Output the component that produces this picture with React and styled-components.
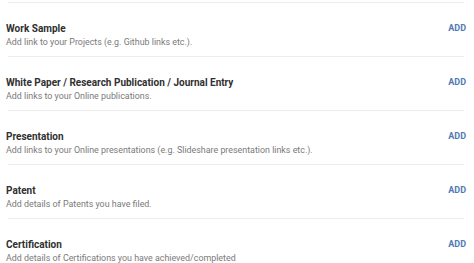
import React from "react";
import styled, { createGlobalStyle } from "styled-components";

const Global = createGlobalStyle`
  html, body { margin: 0; padding: 0; background: #fff; }
  body { font-family: Roboto, "Noto Sans", Arial, sans-serif; }
`;

const List = styled.div`
  padding-top: 2px;
  display: flex;
  flex-direction: column;
`;

const Divider = styled.div`
  height: 1px;
  background: #ececec;
  margin: 0 10px 0 8px;
`;

const Row = styled.div`
  height: 53px;
  display: flex;
  align-items: flex-start;
  justify-content: space-between;
  padding: 20px 8px 0 6px;
  box-sizing: border-box;
`;

const Texts = styled.div`
  display: flex;
  flex-direction: column;
`;

const Title = styled.div`
  font-size: 10px;
  font-weight: 700;
  color: #303030;
  line-height: 12px;
`;

const Sub = styled.div`
  margin-top: 2px;
  font-size: 8.9px;
  color: #7a7a7a;
  line-height: 11px;
`;

const Add = styled.button`
  border: 0;
  background: none;
  padding: 0;
  font-family: inherit;
  font-size: 9px;
  line-height: 11px;
  font-weight: 700;
  color: #5079b5;
`;

const items = [
  ["Work Sample", "Add link to your Projects (e.g. Github links etc.)."],
  ["White Paper / Research Publication / Journal Entry", "Add links to your Online publications."],
  ["Presentation", "Add links to your Online presentations (e.g. Slideshare presentation links etc.)."],
  ["Patent", "Add details of Patents you have filed."],
  ["Certification", "Add details of Certifications you have achieved/completed"],
];

export default function App() {
  return (
    <>
      <Global />
      <List>
        {items.map(([t, s]) => (
          <React.Fragment key={t}>
            <Divider />
            <Row>
              <Texts>
                <Title>{t}</Title>
                <Sub>{s}</Sub>
              </Texts>
              <Add>ADD</Add>
            </Row>
          </React.Fragment>
        ))}
      </List>
    </>
  );
}
